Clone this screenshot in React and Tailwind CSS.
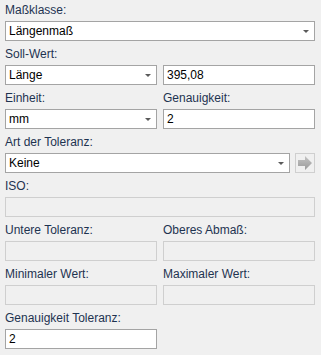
import React from "react";

const LABEL = "h-[20px] pt-[2px] text-[12px] leading-[15px] text-[#1e3350]";

function Caret() {
  return (
    <svg width="6" height="3" viewBox="0 0 6 3" className="absolute right-[5px] top-[8px]">
      <path d="M0 0 H6 L3 3 Z" fill="#5a5a5a" />
    </svg>
  );
}

function Combo({ value, className = "" }) {
  return (
    <div className={`relative h-[20px] border border-[#a4a4a4] bg-white pl-[3px] text-[12px] leading-[18px] text-black ${className}`}>
      {value}
      <Caret />
    </div>
  );
}

function TextBox({ value }) {
  return (
    <div className="h-[20px] border border-[#a4a4a4] bg-white pl-[3px] text-[12px] leading-[18px] text-black">
      {value}
    </div>
  );
}

function Disabled() {
  return <div className="h-[20px] border border-[#cfcfcf] bg-[#f0f0f0]" />;
}

function Field({ label, children }) {
  return (
    <div className="flex flex-col">
      <div className={LABEL}>{label}</div>
      {children}
    </div>
  );
}

export default function App() {
  return (
    <div
      className="h-[355px] w-[321px] overflow-hidden bg-[#f0f0f0] pl-[5px] pr-[6px] pt-[1px]"
      style={{ fontFamily: '"Liberation Sans", Arial, sans-serif' }}
    >
      <div className="flex flex-col gap-[4px]">
        <Field label="Maßklasse:">
          <Combo value="Längenmaß" />
        </Field>

        <div className="grid grid-cols-2 gap-x-[6px]">
          <Field label="Soll-Wert:">
            <Combo value="Länge" />
          </Field>
          <Field label={"\u00a0"}>
            <TextBox value="395,08" />
          </Field>
        </div>

        <div className="grid grid-cols-2 gap-x-[6px]">
          <Field label="Einheit:">
            <Combo value="mm" />
          </Field>
          <Field label="Genauigkeit:">
            <TextBox value="2" />
          </Field>
        </div>

        <Field label="Art der Toleranz:">
          <div className="flex gap-[5px]">
            <Combo value="Keine" className="flex-1" />
            <div className="flex h-[20px] w-[20px] items-center justify-center border border-[#cfcfcf] bg-[#f0f0f0]">
              <svg width="14" height="14" viewBox="0 0 14 14">
                <defs>
                  <linearGradient id="arw" x1="0" y1="0" x2="0" y2="1">
                    <stop offset="0" stopColor="#c4c4c4" />
                    <stop offset="1" stopColor="#9a9a9a" />
                  </linearGradient>
                </defs>
                <path d="M0 4 H7 V0 L14 7 L7 14 V10 H0 Z" fill="url(#arw)" />
              </svg>
            </div>
          </div>
        </Field>

        <Field label="ISO:">
          <Disabled />
        </Field>

        <div className="grid grid-cols-2 gap-x-[6px]">
          <Field label="Untere Toleranz:">
            <Disabled />
          </Field>
          <Field label="Oberes Abmaß:">
            <Disabled />
          </Field>
        </div>

        <div className="grid grid-cols-2 gap-x-[6px]">
          <Field label="Minimaler Wert:">
            <Disabled />
          </Field>
          <Field label="Maximaler Wert:">
            <Disabled />
          </Field>
        </div>

        <div className="grid grid-cols-2 gap-x-[6px]">
          <Field label="Genauigkeit Toleranz:">
            <TextBox value="2" />
          </Field>
        </div>
      </div>
    </div>
  );
}
